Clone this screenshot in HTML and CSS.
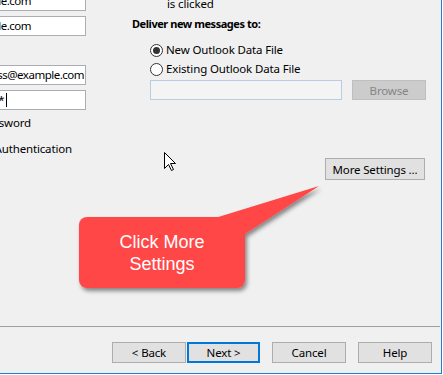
FILE: index.html
```html
<!DOCTYPE html>
<html lang="en">
<head>
    <meta charset="UTF-8">
    <title>Account Settings</title>
    <link rel="stylesheet" href="styles.css">
</head>
<body>

    <div class="window">
        <div class="top">
            <div class="left">
                <div class="left-inner">
                    <div class="field host">mail.example.com</div>
                    <div class="field host gap-small">mail.example.com</div>
                    <div class="field user gap-large">your.address@example.com</div>
                    <div class="field pass gap-small">********<span class="caret"></span></div>
                    <div class="check-label remember">Remember password</div>
                    <div class="check-label spa">Require logon using Secure Password Authentication</div>
                </div>
            </div>

            <div class="right">
                <div class="line indent">is clicked</div>
                <div class="line heading">Deliver new messages to:</div>
                <div class="line radio-row first">
                    <span class="radio checked"></span>
                    <span>New Outlook Data File</span>
                </div>
                <div class="line radio-row">
                    <span class="radio"></span>
                    <span>Existing Outlook Data File</span>
                </div>
                <div class="path-row">
                    <div class="path"></div>
                    <button class="browse" disabled>Browse</button>
                </div>
                <div class="more-row">
                    <button class="btn more">More Settings ...</button>
                </div>
            </div>
        </div>

        <div class="footer">
            <div class="sep"></div>
            <div class="buttons">
                <button class="btn">&lt; Back</button>
                <button class="btn default">Next &gt;</button>
                <button class="btn spaced">Cancel</button>
                <button class="btn spaced">Help</button>
            </div>
        </div>

        <!-- annotation callout -->
        <div class="callout">
            <svg width="255" height="118" viewBox="0 0 255 118">
                <defs>
                    <filter id="shadow" x="-10%" y="-10%" width="130%" height="140%">
                        <feDropShadow dx="2" dy="3" stdDeviation="2" flood-color="#000" flood-opacity="0.45"/>
                    </filter>
                </defs>
                <g filter="url(#shadow)" fill="#ff4646">
                    <rect x="4" y="37" width="166" height="71" rx="8"/>
                    <polygon points="140,38 244,6 170,54"/>
                </g>
            </svg>
            <div class="callout-text">Click More<br>Settings</div>
        </div>

        <svg class="cursor" width="13" height="20" viewBox="0 0 13 20">
            <path d="M0.5 0.5 L0.5 16.5 L4.5 12.5 L7.5 18.5 L9.5 17.5 L6.5 11.5 L11.5 11.5 Z" fill="#fff" stroke="#000" stroke-width="1" stroke-linejoin="miter"/>
        </svg>
    </div>

</body>
</html>
```

FILE: styles.css
```css
* {
    box-sizing: border-box;
}

body {
    margin: 0;
    background-color: white;
    font-family: "Noto Sans", "Segoe UI", sans-serif;
    font-size: 11.5px;
    letter-spacing: -0.15px;
    color: #000;
}

.window {
    position: relative;
    width: 442px;
    height: 374px;
    background-color: #f0f0f0;
    border-right: 1px solid #1a80d4;
    border-bottom: 1px solid #1a80d4;
    display: flex;
    flex-direction: column;
    overflow: hidden;
}

.top {
    display: flex;
}

/* left pane is cut off by the screenshot */
.left {
    width: 86px;
    flex: none;
    overflow: hidden;
    margin-top: -9px;
}

.left-inner {
    width: 300px;
    margin-left: -214px;
    display: flex;
    flex-direction: column;
    align-items: flex-end;
}

.field {
    width: 200px;
    height: 20px;
    background-color: white;
    border: 1px solid #abadb3;
    line-height: 18px;
    letter-spacing: -0.5px;
    text-align: right;
    white-space: nowrap;
    overflow: hidden;
}

.field.host {
    padding-right: 54px;
}

.field.user {
    padding-right: 1px;
}

.field.pass {
    padding-right: 78px;
}

.gap-small {
    margin-top: 5px;
}

.gap-large {
    margin-top: 29px;
}

.caret {
    display: inline-block;
    width: 1px;
    height: 14px;
    margin-left: 2px;
    background-color: #000;
    vertical-align: -3px;
}

.check-label {
    width: 100%;
    height: 16px;
    line-height: 16px;
    text-align: right;
    white-space: nowrap;
}

.remember {
    margin-top: 5px;
    padding-right: 55px;
}

.spa {
    margin-top: 10px;
    padding-right: 14px;
}

.right {
    width: 276px;
    margin-left: 64px;
    margin-top: -4px;
}

.line {
    height: 16px;
    line-height: 16px;
    white-space: nowrap;
}

.indent {
    padding-left: 17px;
}

.heading {
    font-weight: bold;
    font-size: 11px;
    letter-spacing: -0.45px;
    margin-top: 4px;
    margin-left: -18px;
}

.radio-row {
    display: flex;
    align-items: center;
    gap: 3px;
    margin-top: 3px;
}

.radio-row.first {
    margin-top: 10px;
}

.radio {
    width: 13px;
    height: 13px;
    flex: none;
    border: 1px solid #333;
    border-radius: 50%;
    background-color: white;
    position: relative;
}

.radio.checked::after {
    content: "";
    position: absolute;
    left: 2px;
    top: 2px;
    width: 7px;
    height: 7px;
    border-radius: 50%;
    background-color: #333;
}

.path-row {
    display: flex;
    justify-content: space-between;
    margin-top: 3px;
}

.path {
    width: 192px;
    height: 20px;
    border: 1px solid #b9cde2;
    background-color: #f4f4f4;
}

.browse {
    width: 74px;
    height: 20px;
    padding: 0;
    font: inherit;
    letter-spacing: inherit;
    color: #858585;
    background-color: #cccccc;
    border: 1px solid #bfbfbf;
}

.more-row {
    display: flex;
    justify-content: flex-end;
    margin-top: 58px;
    padding-right: 1px;
}

.btn {
    width: 74px;
    height: 21px;
    padding: 0;
    font: inherit;
    letter-spacing: inherit;
    color: #000;
    background-color: #e1e1e1;
    border: 1px solid #adadad;
}

.btn.more {
    width: 100px;
    height: 22px;
}

.btn.default {
    width: 73px;
    margin-left: 1px;
    border: 2px solid #0078d7;
}

.btn.spaced {
    margin-left: 12px;
}

.footer {
    margin-top: auto;
}

.sep {
    width: 440px;
    height: 1px;
    background-color: #a0a0a0;
}

.buttons {
    display: flex;
    justify-content: flex-end;
    padding: 15px 9px 10px 0;
}

.callout {
    position: absolute;
    left: 75px;
    top: 180px;
    width: 255px;
    height: 118px;
}

.callout svg {
    display: block;
}

.callout-text {
    position: absolute;
    left: 4px;
    top: 37px;
    width: 166px;
    height: 71px;
    display: flex;
    align-items: center;
    justify-content: center;
    text-align: center;
    font-family: "Liberation Sans", Arial, sans-serif;
    font-size: 18px;
    line-height: 22px;
    letter-spacing: 0;
    color: white;
}

.cursor {
    position: absolute;
    left: 164px;
    top: 152px;
}
```
